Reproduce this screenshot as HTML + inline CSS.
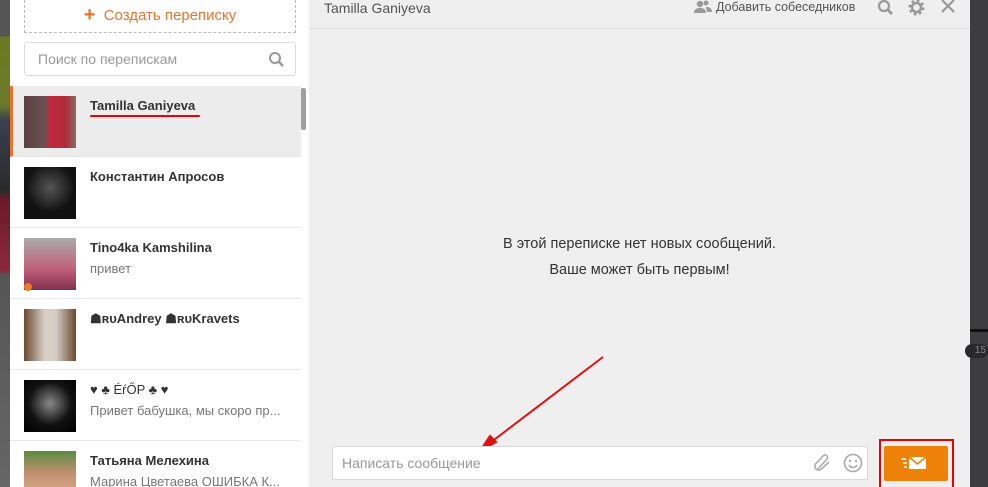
<!DOCTYPE html>
<html style="width:988px;height:487px;overflow:hidden"><head><meta charset="utf-8"><style>
*{margin:0;padding:0;box-sizing:border-box}
body{width:988px;height:487px;overflow:hidden;position:relative;font-family:"Liberation Sans",Arial,sans-serif;background:#efefef}
.abs{position:absolute}
.left{left:10px;top:0;width:299px;height:487px;background:#fff;overflow:hidden}
.item{position:absolute;left:0;width:291px;height:71px;border-bottom:1px solid #e8e8e8;overflow:hidden}
.av{position:absolute;left:14px;top:10px;width:52px;height:52px}
.nm{position:absolute;left:80px;top:12px;font-size:13px;font-weight:bold;color:#333}
.sb{position:absolute;left:80px;top:33px;font-size:13px;color:#777}
</style></head><body>
<div class="abs" style="left:0;top:0;width:10px;height:487px;background:linear-gradient(#555 0,#555 36px,#6b7a20 37px,#6a7a2a 105px,#3a4050 120px,#2a2a2a 190px,#6a1a2a 200px,#8a2a3a 270px,#555 275px,#666 487px)"></div>
<div class="abs left">
 <div class="abs" style="left:14px;top:0;width:272px;height:33px;border:1px dashed #bbb;border-top:none;text-align:center;color:#eb722e;font-size:15px;line-height:30px"><span style="font-size:20px;font-weight:bold;vertical-align:-1px">+</span>&nbsp; Создать переписку</div>
 <div class="abs" style="left:14px;top:42px;width:272px;height:34px;border:1px solid #dcdcdc;border-radius:3px;color:#999;font-size:14px;line-height:32px;padding-left:13px">Поиск по перепискам
  <svg class="abs" style="right:10px;top:8px" width="17" height="17" viewBox="0 0 17 17"><circle cx="7" cy="7" r="5" fill="none" stroke="#999" stroke-width="2"/><path d="M10.5 10.5L15 15" stroke="#999" stroke-width="2.5"/></svg></div>
 <div class="item" style="top:86px;background:#ececec;border-left:3px solid #eb722e;height:71px"><div class="av" style="left:11px;background:linear-gradient(90deg,#5a4040 0,#6a5050 40%,#c02a40 50%,#b02a3a 80%,#807060 100%)"></div><div class="nm" style="left:77px">Tamilla Ganiyeva</div><div class="abs" style="left:77px;top:29px;width:110px;height:2px;background:#e00;border-radius:1px"></div></div>
 <div class="item" style="top:157px"><div class="av" style="background:radial-gradient(circle at 50% 40%,#555,#111 60%)"></div><div class="nm">Константин Апросов</div></div>
 <div class="item" style="top:228px"><div class="av" style="background:linear-gradient(#aaa,#c0607a 60%,#803050)"></div><div class="abs" style="left:14px;top:55px;width:8px;height:8px;border-radius:50%;background:#f07a22"></div><div class="nm">Tino4ka Kamshilina</div><div class="sb">привет</div></div>
 <div class="item" style="top:299px"><div class="av" style="background:linear-gradient(90deg,#6a4a30,#d8d0c8 40%,#d8d0c8 60%,#6a4a30)"></div><div class="nm">☗ʀᴜAndrey ☗ʀᴜKravets</div></div>
 <div class="item" style="top:370px"><div class="av" style="background:radial-gradient(circle at 50% 45%,#888,#111 55%,#000)"></div><div class="nm" style="font-weight:normal;color:#333">♥ ♣ ÉŕŐP ♣ ♥</div><div class="sb">Привет бабушка, мы скоро пр...</div></div>
 <div class="item" style="top:441px;height:46px;border:none"><div class="av" style="height:36px;background:linear-gradient(#5a8a40,#c09070 60%,#d0a080)"></div><div class="nm">Татьяна Мелехина</div><div class="sb">Марина Цветаева ОШИБКА К...</div></div>
 <div class="abs" style="left:291px;top:88px;width:5px;height:42px;background:#a0a0a0;border-radius:2px"></div>
</div>
<div class="abs" style="left:309px;top:0;width:661px;height:29px;border-bottom:1px solid #ddd"></div>
<div class="abs" style="left:324px;top:0;font-size:14px;color:#555">Tamilla Ganiyeva</div>
<svg class="abs" style="left:693px;top:0" width="20" height="14" viewBox="0 0 20 14"><circle cx="7" cy="4" r="3.2" fill="#999"/><path d="M1 13c0-4 3-5 6-5s6 1 6 5z" fill="#999"/><circle cx="13" cy="3" r="2.5" fill="#999"/><path d="M13 7c3 0 6 1 6 5h-5z" fill="#999"/></svg>
<div class="abs" style="left:716px;top:0;font-size:12.5px;color:#555">Добавить собеседников</div>
<svg class="abs" style="left:877px;top:0" width="18" height="16" viewBox="0 0 18 16"><circle cx="7" cy="6" r="5" fill="none" stroke="#999" stroke-width="2.2"/><path d="M10.5 9.5L15 14" stroke="#999" stroke-width="2.8"/></svg>
<svg class="abs" style="left:907px;top:0" width="19" height="17" viewBox="0 0 19 17"><circle cx="9.5" cy="7.5" r="6" fill="none" stroke="#999" stroke-width="4" stroke-dasharray="2.4 2.3"/><circle cx="9.5" cy="7.5" r="4.5" fill="none" stroke="#999" stroke-width="2.5"/></svg>
<svg class="abs" style="left:940px;top:0" width="16" height="14" viewBox="0 0 16 14"><path d="M2 0L14 12M14 0L2 12" stroke="#999" stroke-width="2.2"/></svg>
<div class="abs" style="left:309px;top:231px;width:661px;text-align:center;font-size:14.5px;color:#333;line-height:26px">В этой переписке нет новых сообщений.<br>Ваше может быть первым!</div>
<svg class="abs" style="left:470px;top:350px" width="140" height="110"><path d="M133 7L16 96" stroke="#e01010" stroke-width="2"/><path d="M10 101L26 92L20 86z" fill="#e01010" stroke="#e01010" stroke-width="2"/></svg>
<div class="abs" style="left:332px;top:446px;width:536px;height:34px;background:#fff;border:1px solid #d8d8d8;border-radius:2px;font-size:14px;color:#999;line-height:32px;padding-left:9px">Написать сообщение</div>
<svg class="abs" style="left:813px;top:453px" width="20" height="20" viewBox="0 0 20 20"><path d="M5 16L14 6a2.5 2.5 0 0 0-3.5-3.5L2.5 11a4 4 0 0 0 5.5 5.5L16 9" fill="none" stroke="#aaa" stroke-width="1.6"/></svg>
<svg class="abs" style="left:843px;top:453px" width="20" height="20" viewBox="0 0 20 20"><circle cx="10" cy="10" r="8.5" fill="none" stroke="#aaa" stroke-width="1.6"/><circle cx="7" cy="8" r="1.2" fill="#aaa"/><circle cx="13" cy="8" r="1.2" fill="#aaa"/><path d="M6 12a4.5 4.5 0 0 0 8 0" fill="none" stroke="#aaa" stroke-width="1.5"/></svg>
<div class="abs" style="left:879px;top:439px;width:75px;height:48px;border:2px solid #e00;border-bottom:none"></div>
<div class="abs" style="left:884px;top:446px;width:64px;height:35px;background:#ee8208;border-radius:2px"></div>
<svg class="abs" style="left:899px;top:455px" width="30" height="16" viewBox="0 0 30 16"><rect x="10" y="2" width="17" height="12" fill="#fff"/><path d="M10 2l8.5 7L27 2" fill="none" stroke="#ee8208" stroke-width="1.6"/><path d="M2 4h5M4 8h4M5 12h3" stroke="#fff" stroke-width="1.6"/></svg>
<div class="abs" style="left:970px;top:0;width:18px;height:487px;background:#3d3d40"></div>
<div class="abs" style="left:970px;top:329px;width:18px;height:3px;background:#111"></div>
<div class="abs" style="left:965px;top:344px;width:23px;height:14px;border-radius:7px;background:#2a2a2c;color:#888;font-size:10px;line-height:14px;text-align:right;padding-right:2px">15</div>
</body></html>
